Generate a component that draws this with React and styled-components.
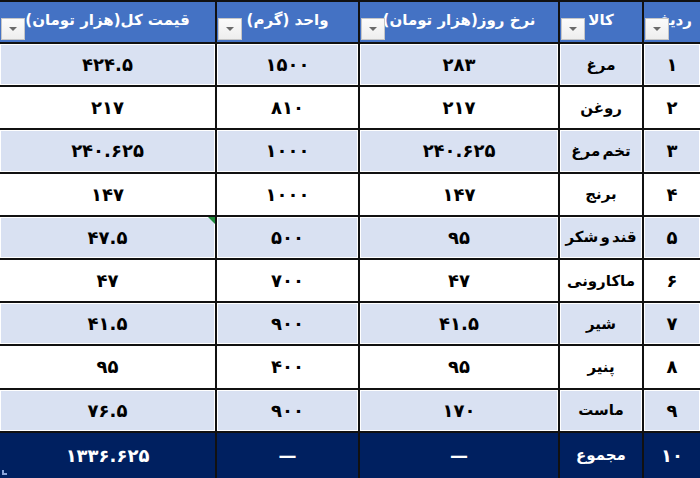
import React from 'react';
import styled, { createGlobalStyle } from 'styled-components';

const GlobalStyle = createGlobalStyle`
  html, body {
    margin: 0;
    padding: 0;
    background: #ffffff;
  }
  body {
    font-family: "DejaVu Sans", "Liberation Sans", sans-serif;
  }
`;

// --- Styled Components ---

const Sheet = styled.div`
  direction: rtl;
  width: 700px;
  height: 478px;
  box-sizing: border-box;
  padding-top: 2px;
  background: #111;
  display: grid;
  grid-template-columns: 56px 82px 198px 141px 1fr;
  grid-template-rows: 40px repeat(9, 41.2px) 1fr;
  gap: 2px;
  overflow: hidden;
  position: relative;
`;

const HeadCell = styled.div`
  position: relative;
  background: #4472c4;
  color: #fff;
  font-weight: bold;
  font-size: 15px;
  display: flex;
  align-items: center;
  justify-content: center;
  padding-bottom: 5px;
  white-space: nowrap;
  overflow: hidden;
`;

const FilterButton = styled.span`
  position: absolute;
  left: 1px;
  bottom: 2px;
  width: 24px;
  height: 22px;
  box-sizing: border-box;
  background: linear-gradient(#fbfbfb, #eeeeee);
  border: 1px solid #c6c6c6;
  display: flex;
  align-items: center;
  justify-content: center;

  &::after {
    content: '';
    border-left: 4px solid transparent;
    border-right: 4px solid transparent;
    border-top: 4px solid #6b6b6b;
  }
`;

const Cell = styled.div`
  position: relative;
  background: ${p => (p.$band ? '#d9e1f2' : '#ffffff')};
  box-shadow: inset 0 0 0 1px #ffffff;
  color: #000;
  font-weight: bold;
  font-size: ${p => (p.$name ? '15px' : '18px')};
  word-spacing: ${p => (p.$name ? '-3px' : 'normal')};
  display: flex;
  align-items: center;
  justify-content: center;
  white-space: nowrap;
  overflow: hidden;
`;

const TotalCell = styled.div`
  position: relative;
  background: #002060;
  color: #fff;
  font-weight: bold;
  font-size: ${p => (p.$name ? '15px' : '18px')};
  display: flex;
  align-items: center;
  justify-content: center;
  white-space: nowrap;
`;

const ErrorMark = styled.span`
  position: absolute;
  top: 0;
  right: 0;
  width: 0;
  height: 0;
  border-top: 7px solid #1f8a3a;
  border-left: 7px solid transparent;
`;

const ResizeHandle = styled.span`
  position: absolute;
  left: 2px;
  bottom: 3px;
  width: 5px;
  height: 5px;
  border-left: 2px solid #8aa4d8;
  border-bottom: 2px solid #8aa4d8;
  box-sizing: border-box;
`;

const toFa = v => String(v).replace(/\d/g, d => '۰۱۲۳۴۵۶۷۸۹'[d]);

const headers = ['ردیف', 'کالا', 'نرخ روز(هزار تومان)', 'واحد (گرم)', 'قیمت کل(هزار تومان)'];

const rows = [
  [1, 'مرغ', '283', '1500', '424.5'],
  [2, 'روغن', '217', '810', '217'],
  [3, 'تخم مرغ', '240.625', '1000', '240.625'],
  [4, 'برنج', '147', '1000', '147'],
  [5, 'قند و شکر', '95', '500', '47.5'],
  [6, 'ماکارونی', '47', '700', '47'],
  [7, 'شیر', '41.5', '900', '41.5'],
  [8, 'پنیر', '95', '400', '95'],
  [9, 'ماست', '170', '900', '76.5'],
];

const App = () => (
  <>
    <GlobalStyle />
    <Sheet>
      {headers.map(h => (
        <HeadCell key={h}>
          {h}
          <FilterButton />
        </HeadCell>
      ))}

      {rows.map((r, i) =>
        r.map((v, j) => (
          <Cell key={`${i}-${j}`} $band={i % 2 === 0} $name={j === 1}>
            <span dir="rtl">{toFa(v)}</span>
            {i === 4 && j === 4 && <ErrorMark />}
          </Cell>
        ))
      )}

      <TotalCell>{toFa(10)}</TotalCell>
      <TotalCell $name>مجموع</TotalCell>
      <TotalCell>—</TotalCell>
      <TotalCell>—</TotalCell>
      <TotalCell>{toFa('1336.625')}</TotalCell>
      <ResizeHandle />
    </Sheet>
  </>
);

export default App;
